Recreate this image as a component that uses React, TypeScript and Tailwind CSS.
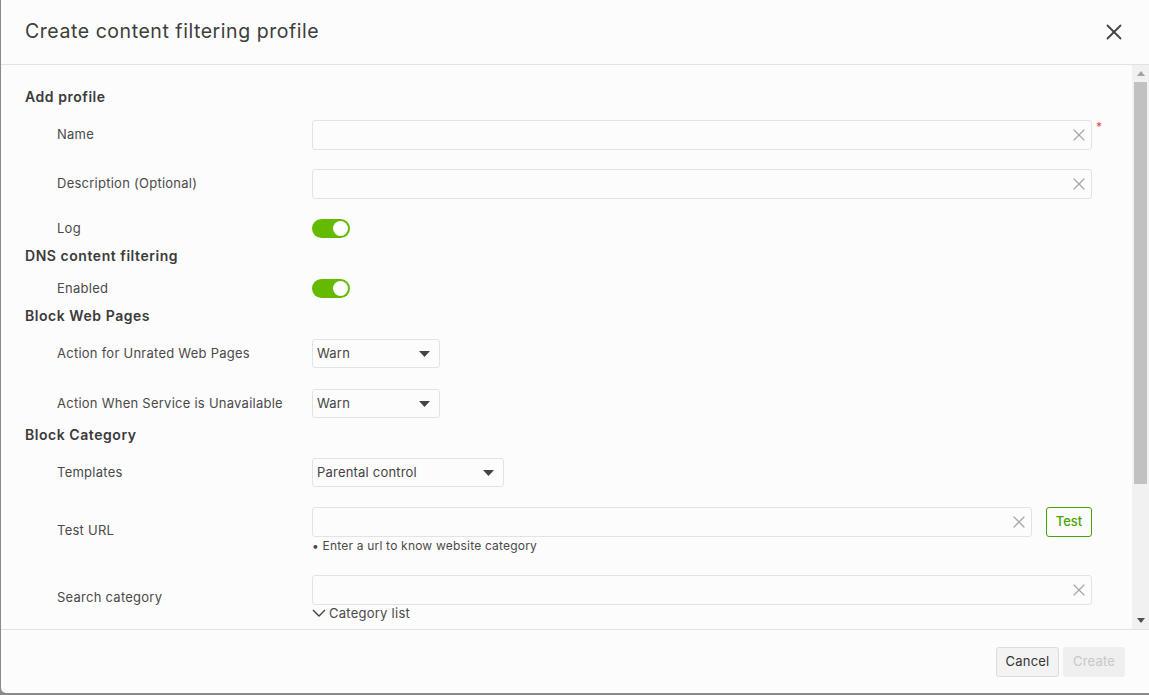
import { X } from 'lucide-react'

const font = { fontFamily: 'Inter, "Noto Sans", Arial, sans-serif' }

function ClearInput({ width = 'w-[780px]' }: { width?: string }) {
  return (
    <div className={`relative h-[30px] ${width} rounded-[3px] border border-[#e3e3e3] bg-[#fcfcfc]`}>
      <X className="absolute right-[2px] top-[4px] h-[20px] w-[20px] text-[#a8a8a8]" strokeWidth={1.5} />
    </div>
  )
}

function Select({ value, width }: { value: string; width: string }) {
  return (
    <div className={`flex h-[29px] ${width} items-center justify-between rounded-[3px] border border-[#e3e3e3] bg-[#fcfcfc] pl-[4px] pr-[9px] text-[13px] tracking-[0.2px] text-[#444]`}>
      <span>{value}</span>
      <svg width="11" height="6" viewBox="0 0 11 6"><path d="M0 0h11L5.5 6z" fill="#444" /></svg>
    </div>
  )
}

function Toggle() {
  return (
    <div className="flex h-[19px] w-[38px] items-center justify-end rounded-full bg-[#63ba00] pr-[2px]">
      <div className="h-[15px] w-[15px] rounded-full bg-white" />
    </div>
  )
}

function Row({ label, children, className = '' }: { label: string; children: React.ReactNode; className?: string }) {
  return (
    <div className={`flex items-center pl-[32px] ${className}`}>
      <div className="w-[255px] text-[13px] tracking-[0.25px] text-[#4a4a4a]">{label}</div>
      <div className="flex flex-col">{children}</div>
    </div>
  )
}

function Heading({ text, className = '' }: { text: string; className?: string }) {
  return <div className={`h-[20px] text-[14px] font-semibold leading-[20px] tracking-[0.55px] text-[#3a3a3a] ${className}`}>{text}</div>
}

export default function App() {
  return (
    <div className="h-[695px] w-[1149px] overflow-hidden bg-[#8a8a8a]" style={font}>
      <div className="ml-[1px] flex h-[693px] w-[1148px] flex-col overflow-hidden rounded-bl-[5px] bg-[#fcfcfc]">
        {/* Header */}
        <div className="flex h-[65px] shrink-0 items-center justify-between border-b border-[#e2e2e2] pl-[24px] pr-[22px]">
          <div className="text-[19.5px] tracking-[0.55px] text-[#3d3d3d]">Create content filtering profile</div>
          <X className="h-[26px] w-[26px] text-[#444]" strokeWidth={1.7} />
        </div>

        {/* Body */}
        <div className="flex h-[564px] shrink-0">
          <div className="flex-1 overflow-hidden pl-[24px] pt-[22px]">
            <Heading text="Add profile" />
            <Row label="Name" className="mt-[13px]">
              <div className="relative">
                <ClearInput />
                <span className="absolute -right-[10px] top-[-2px] text-[12px] text-[#f04848]">*</span>
              </div>
            </Row>
            <Row label="Description (Optional)" className="mt-[19px]">
              <ClearInput />
            </Row>
            <Row label="Log" className="mt-[20px]">
              <Toggle />
            </Row>
            <Heading text="DNS content filtering" className="mt-[7px]" />
            <Row label="Enabled" className="mt-[13px]">
              <Toggle />
            </Row>
            <Heading text="Block Web Pages" className="mt-[8px]" />
            <Row label="Action for Unrated Web Pages" className="mt-[13px]">
              <Select value="Warn" width="w-[128px]" />
            </Row>
            <Row label="Action When Service is Unavailable" className="mt-[21px]">
              <Select value="Warn" width="w-[128px]" />
            </Row>
            <Heading text="Block Category" className="mt-[7px]" />
            <Row label="Templates" className="mt-[13px]">
              <Select value="Parental control" width="w-[192px]" />
            </Row>
            <Row label="Test URL" className="mt-[20px]">
              <div className="flex items-center gap-[14px]">
                <ClearInput width="w-[720px]" />
                <div className="flex h-[30px] w-[46px] items-center justify-center rounded-[3px] border border-[#4aa400] text-[13px] font-medium text-[#4aa400]">
                  Test
                </div>
              </div>
              <div className="mt-[1px] h-[16px] text-[12px] leading-[16px] tracking-[0.2px] text-[#4a4a4a]">• Enter a url to know website category</div>
            </Row>
            <Row label="Search category" className="mt-[21px]">
              <ClearInput />
              <div className="flex h-[16px] items-center text-[13px] leading-[16px] tracking-[0.25px] text-[#4a4a4a]">
                <svg width="14" height="8" viewBox="0 0 14 8" className="mr-[3px]">
                  <path d="M1 1l6 6 6-6" fill="none" stroke="#444" strokeWidth="1.4" />
                </svg>
                Category list
              </div>
            </Row>
          </div>

          {/* Scrollbar */}
          <div className="flex w-[17px] shrink-0 flex-col items-center bg-[#f1f1f1]">
            <div className="flex h-[17px] items-center justify-center">
              <svg width="8" height="5" viewBox="0 0 8 5"><path d="M4 0l4 5H0z" fill="#a3a3a3" /></svg>
            </div>
            <div className="h-[402px] w-[13px] bg-[#c1c1c1]" />
            <div className="flex-1" />
            <div className="flex h-[17px] items-center justify-center">
              <svg width="8" height="5" viewBox="0 0 8 5"><path d="M0 0h8L4 5z" fill="#505050" /></svg>
            </div>
          </div>
        </div>

        {/* Footer */}
        <div className="flex flex-1 items-start justify-end gap-[4px] border-t border-[#e2e2e2] pr-[24px] pt-[17px]">
          <div className="flex h-[30px] w-[63px] items-center justify-center rounded-[3px] border border-[#dcdcdc] bg-[#f3f3f3] text-[13px] tracking-[0.2px] text-[#333]">
            Cancel
          </div>
          <div className="flex h-[30px] w-[62px] items-center justify-center rounded-[3px] bg-[#efefef] text-[13px] tracking-[0.2px] text-[#c8c8c8]">
            Create
          </div>
        </div>
      </div>
    </div>
  )
}
